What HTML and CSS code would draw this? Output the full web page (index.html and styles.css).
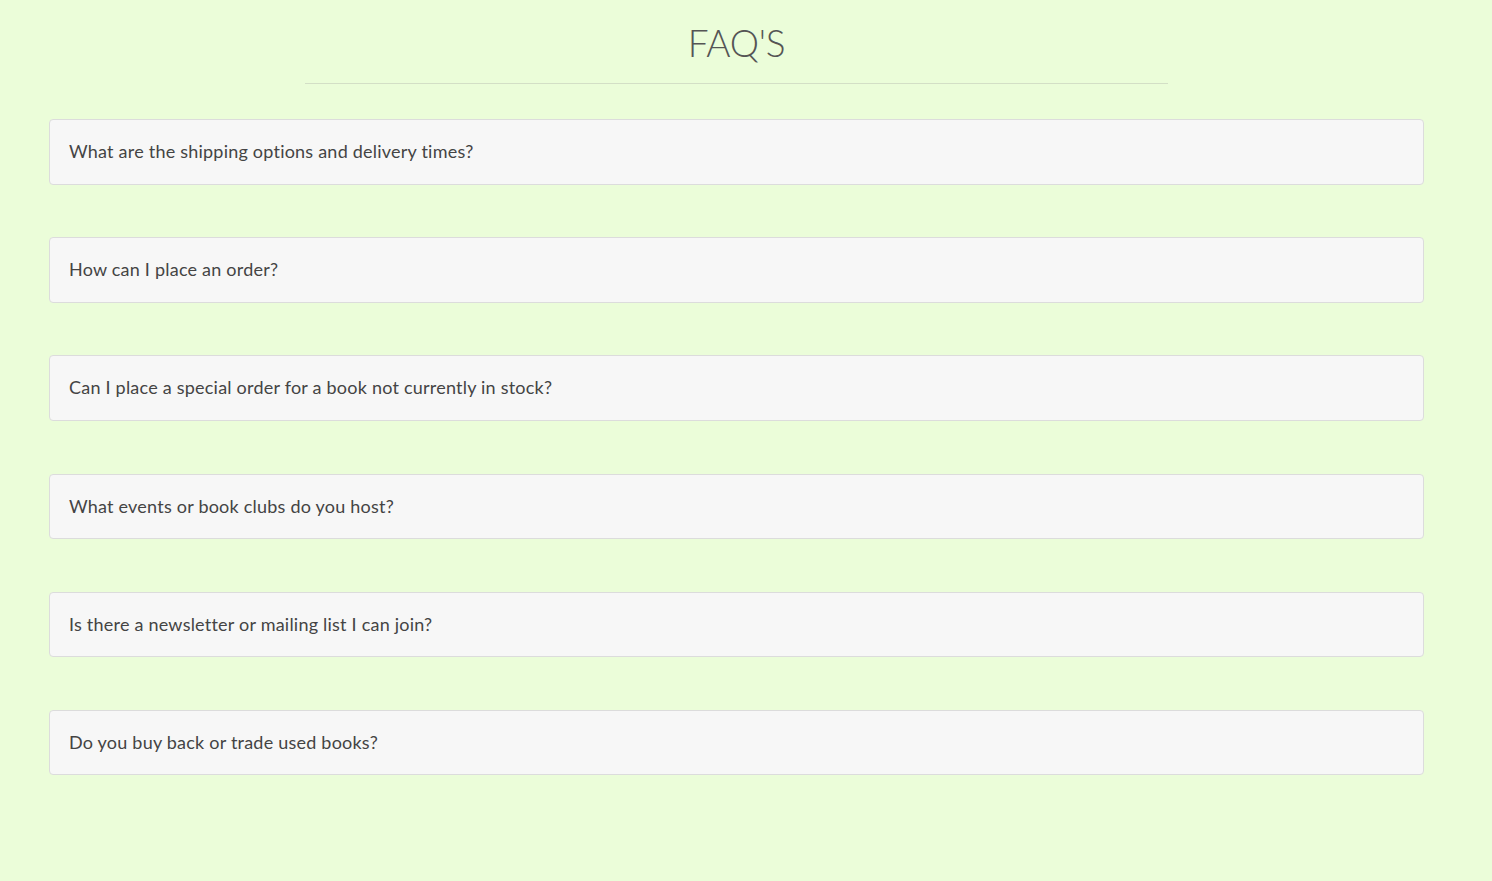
FILE: index.html
```html
<!DOCTYPE html>
<html lang="en">
<head>
<meta charset="utf-8">
<title>FAQ'S</title>
<link rel="stylesheet" href="styles.css">
</head>
<body>
<main class="faq">
  <header class="faq-head">
    <h1 class="faq-title">FAQ'S</h1>
    <hr class="faq-rule">
  </header>
  <section class="faq-list">
    <div class="faq-item">What are the shipping options and delivery times?</div>
    <div class="faq-item">How can I place an order?</div>
    <div class="faq-item">Can I place a special order for a book not currently in stock?</div>
    <div class="faq-item">What events or book clubs do you host?</div>
    <div class="faq-item">Is there a newsletter or mailing list I can join?</div>
    <div class="faq-item">Do you buy back or trade used books?</div>
  </section>
</main>
</body>
</html>
```

FILE: styles.css
```css
html, body {
  margin: 0;
  padding: 0;
}
body {
  background: #ebfdd9;
  font-family: Lato, "Open Sans", sans-serif;
  color: #444;
  min-height: 881px;
}
.faq {
  padding: 0 68px 0 49px;
}
.faq-head {
  display: flex;
  flex-direction: column;
  align-items: center;
  padding-top: 20px;
}
.faq-title {
  margin: 0;
  font-size: 37px;
  font-weight: 300;
  color: #555;
  line-height: 46px;
  letter-spacing: -0.3px;
}
.faq-rule {
  width: 863px;
  margin: 17px 0 0;
  border: 0;
  border-top: 1px solid #d3dfc6;
}
.faq-list {
  display: flex;
  flex-direction: column;
  gap: 52.7px;
  margin-top: 35px;
}
.faq-item {
  background: #f7f7f7;
  border: 1px solid #dcdcdc;
  border-radius: 4px;
  padding: 18px 19px 18.5px;
  font-size: 18px;
  line-height: 27px;
  color: #444;
  font-weight: 400;
  letter-spacing: 0.22px;
}
```
